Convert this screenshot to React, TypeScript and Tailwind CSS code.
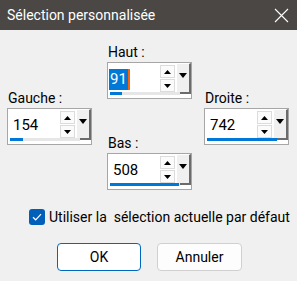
import React from 'react';

const font = { fontFamily: 'Roboto, "Noto Sans", sans-serif' };

function Tri({ up, w, h }: { up?: boolean; w: number; h: number }) {
  return (
    <svg width={w} height={h} viewBox={`0 0 ${w} ${h}`} className="block">
      <polygon points={up ? `0,${h} ${w},${h} ${w / 2},0` : `0,0 ${w},0 ${w / 2},${h}`} fill="#000" />
    </svg>
  );
}

function Spin({ value, fill, selected }: { value: string; fill: number; selected?: boolean }) {
  return (
    <div className="flex h-[37px] w-[85px] flex-col border border-[#a6a6a6] bg-white">
      <div className="flex h-[29px]">
        <div className={`flex flex-1 items-center pt-[4px] text-[15px] text-black ${selected ? 'pl-[1px]' : 'pl-[5px]'}`}>
          {selected ? (
            <span className="flex items-center">
              <span className="bg-[#0078d7] px-[1px] leading-[21px] text-white">{value}</span>
              <span className="h-[21px] w-[2px] bg-[#f7630c]" />
            </span>
          ) : (
            <span className="leading-[21px]">{value}</span>
          )}
        </div>
        <div className="mt-[2px] flex w-[15px] flex-col gap-[1px]">
          <div className="flex h-[14px] items-center justify-center border border-[#dcdcdc] bg-[#fbfbfb]">
            <Tri up w={7} h={4} />
          </div>
          <div className="flex h-[14px] items-center justify-center border border-[#dcdcdc] bg-[#fbfbfb]">
            <Tri w={7} h={4} />
          </div>
        </div>
        <div className="ml-[1px] flex h-[31px] w-[15px] justify-center border-t border-l border-r-2 border-b-2 border-t-white border-l-white border-r-[#6b6b6b] border-b-[#6b6b6b] bg-[#f0f0f0] pt-[9px]">
          <Tri w={8} h={5} />
        </div>
      </div>
      <div className="ml-[2px] h-[3px] w-[70px] bg-[#e6e6e6]">
        <div className="h-[3px] bg-[#0078d7]" style={{ width: fill }} />
      </div>
    </div>
  );
}

function Label({ text }: { text: string }) {
  return <div className="pl-[1px] text-[14px] leading-[17px] text-black">{text}</div>;
}

export default function App() {
  return (
    <div className="h-[281px] w-[297px] overflow-hidden bg-[#f0f0f0]" style={font}>
      <div className="flex h-[30px] items-center justify-between bg-[#4a4744] pl-[7px] pr-[8px] text-white">
        <span className="text-[14px] leading-[20px]">Sélection personnalisée</span>
        <svg width="15" height="15" viewBox="0 0 15 15">
          <path d="M1 1 L14 14 M14 1 L1 14" stroke="#fff" strokeWidth="1.1" />
        </svg>
      </div>

      <div className="flex pl-[7px]">
        <div className="mt-[60px] flex flex-col gap-[1px]">
          <Label text="Gauche :" />
          <Spin value="154" fill={13} />
        </div>
        <div className="ml-[15px] mt-[14px] flex flex-col">
          <div className="flex flex-col gap-[1px]">
            <Label text="Haut :" />
            <Spin value="91" fill={12} selected />
          </div>
          <div className="mt-[36px] flex flex-col gap-[1px]">
            <Label text="Bas :" />
            <Spin value="508" fill={69} />
          </div>
        </div>
        <div className="ml-[12px] mt-[60px] flex flex-col gap-[1px]">
          <Label text="Droite :" />
          <Spin value="742" fill={70} />
        </div>
      </div>

      <div className="mt-[18px] flex items-center pl-[29px]">
        <div className="flex h-[16px] w-[16px] items-center justify-center rounded-[3px] bg-[#005fb8]">
          <svg width="10" height="8" viewBox="0 0 10 8">
            <path d="M1 4.2 L3.7 6.8 L9 1.2" stroke="#fff" strokeWidth="1.2" fill="none" />
          </svg>
        </div>
        <span className="ml-[4px] whitespace-pre text-[14px] leading-[18px] text-black">
          Utiliser la  sélection actuelle par défaut
        </span>
      </div>

      <div className="mt-[17px] flex pl-[57px]">
        <button className="h-[28px] w-[84px] rounded-[4px] border border-[#0067c0] bg-white text-[14px] text-black">
          OK
        </button>
        <button className="ml-[16px] h-[28px] w-[85px] rounded-[4px] border border-[#d0d0d0] bg-[#fdfdfd] text-[14px] text-black">
          Annuler
        </button>
      </div>
    </div>
  );
}
